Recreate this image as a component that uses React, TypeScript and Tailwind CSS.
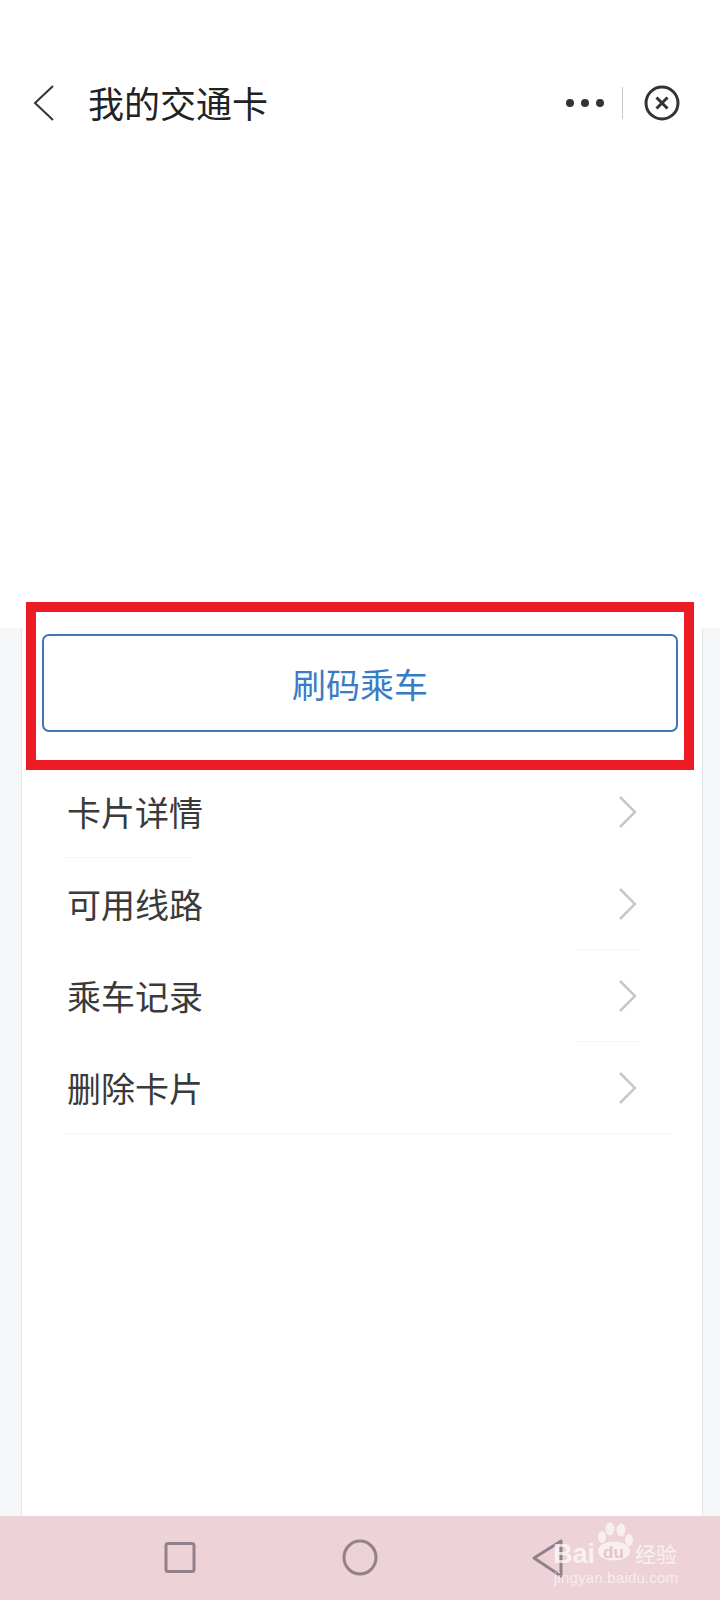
// App.tsx

const rows = [
  { label: "卡片详情", sep: "ml-[43px] w-[128px]" },
  { label: "可用线路", sep: "ml-[554px] w-[65px]" },
  { label: "乘车记录", sep: "ml-[554px] w-[65px]" },
  { label: "删除卡片", sep: "ml-[43px] w-[608px] h-[2px] bg-[#efefef]" },
];

function NavIcons() {
  return (
    <div className="relative h-[84px] bg-[#edd2d8]">
      <svg width="720" height="84" viewBox="0 0 720 84" fill="none" stroke="#94808a" strokeWidth="3">
        <rect x="166" y="27.5" width="28" height="28" rx="2" />
        <ellipse cx="360" cy="41.5" rx="16" ry="16.5" />
        <path d="M561 25 L534 42 L561 60 Z" strokeLinejoin="round" />
      </svg>
      {/* watermark */}
      <span className="absolute left-[553px] top-[22px] text-[27px] leading-[32px] font-bold text-white/70 [font-family:'Liberation_Sans',sans-serif]">
        Bai
      </span>
      <svg className="absolute left-[594px] top-[4px]" width="42" height="42" viewBox="0 0 42 42" fill="#ffffff" fillOpacity="0.65">
        <ellipse cx="8" cy="17" rx="4" ry="6" />
        <ellipse cx="16" cy="9" rx="4.5" ry="6.5" />
        <ellipse cx="27" cy="10" rx="4.5" ry="6.5" />
        <ellipse cx="35" cy="20" rx="4" ry="6" />
        <ellipse cx="20" cy="31" rx="16" ry="9.5" />
      </svg>
      <span className="absolute left-[603px] top-[27px] text-[17px] leading-[20px] font-bold text-[#e6c3cb] [font-family:'Liberation_Sans',sans-serif]">
        du
      </span>
      <span className="absolute left-[635px] top-[24px] text-[21px] leading-[26px] text-white/70">经验</span>
      <span className="absolute left-[554px] top-[53px] text-[15px] leading-[18px] tracking-[0.2px] text-white/60 [font-family:'Liberation_Sans',sans-serif]">
        jingyan.baidu.com
      </span>
    </div>
  );
}

export default function App() {
  return (
    <div className="relative flex h-[1600px] w-[720px] flex-col overflow-hidden bg-white [font-family:'Noto_Sans_CJK_SC',sans-serif]">
      {/* Top bar */}
      <div className="flex h-[628px] flex-col pt-[85px]">
        <div className="flex h-[36px] items-center">
          <svg className="ml-[32px]" width="24" height="36" viewBox="0 0 24 36" fill="none" stroke="#333333" strokeWidth="2">
            <path d="M21 1 L3 18 L21 35" />
          </svg>
          <span className="ml-[32px] -mt-[3px] text-[36px] leading-[36px] text-[#222222]">我的交通卡</span>
          <div className="ml-auto mr-[40px] flex items-center">
            <div className="flex gap-[7px]">
              <span className="h-[8px] w-[8px] rounded-full bg-[#333333]" />
              <span className="h-[8px] w-[8px] rounded-full bg-[#333333]" />
              <span className="h-[8px] w-[8px] rounded-full bg-[#333333]" />
            </div>
            <div className="ml-[18px] h-[32px] w-px bg-[#c8c8c8]" />
            <svg className="ml-[21px]" width="36" height="36" viewBox="0 0 36 36" fill="none" stroke="#333333">
              <circle cx="18" cy="18" r="16" strokeWidth="3" />
              <path d="M12.5 12.5 L23.5 23.5 M23.5 12.5 L12.5 23.5" strokeWidth="3" />
            </svg>
          </div>
        </div>
      </div>

      {/* Card area */}
      <div className="flex flex-1 bg-[#f6f7f8] pl-[21px] pr-[17px]">
        <div className="flex-1 border-x border-[#e2e6ee] bg-white pt-[6px]">
          <div className="ml-[20px] flex h-[98px] w-[636px] items-center justify-center rounded-[7px] border-2 border-[#3f76b8] text-[34px] text-[#3a7cc4]">
            刷码乘车
          </div>
          <div className="mt-[34px]">
            {rows.map((row) => (
              <div key={row.label}>
                <div className="flex h-[91px] items-center pl-[45px]">
                  <span className="text-[34px] leading-[40px] text-[#3a3a3a]">{row.label}</span>
                  <svg className="ml-auto mr-[64px]" width="20" height="32" viewBox="0 0 20 32" fill="none" stroke="#c8c8c8" strokeWidth="2.5">
                    <path d="M2 1 L17 16 L2 31" />
                  </svg>
                </div>
                <div className={`h-px bg-[#f6f6f6] ${row.sep}`} />
              </div>
            ))}
          </div>
        </div>
      </div>

      <NavIcons />

      {/* Red highlight box over the button */}
      <div className="absolute left-[26px] top-[602px] h-[168px] w-[668px] border-[10px] border-[#ed1c24]" />
    </div>
  );
}
